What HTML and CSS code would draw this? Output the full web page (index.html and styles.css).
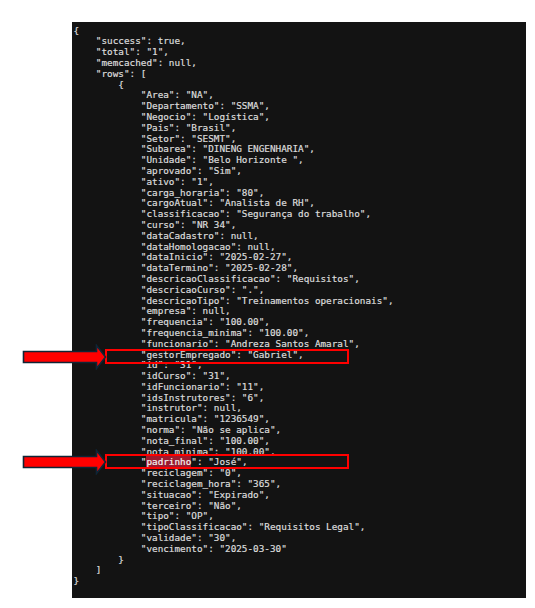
FILE: index.html
```html
<!DOCTYPE html>
<html lang="pt">
<head>
<meta charset="utf-8">
<title>JSON</title>
<link rel="stylesheet" href="styles.css">
</head>
<body>
<div class="page">
  <div class="panel">
<pre class="json">{
    "success": true,
    "total": "1",
    "memcached": null,
    "rows": [
        {
            "Area": "NA",
            "Departamento": "SSMA",
            "Negocio": "Logística",
            "Pais": "Brasil",
            "Setor": "SESMT",
            "Subarea": "DINENG ENGENHARIA",
            "Unidade": "Belo Horizonte ",
            "aprovado": "Sim",
            "ativo": "1",
            "carga_horaria": "80",
            "cargoAtual": "Analista de RH",
            "classificacao": "Segurança do trabalho",
            "curso": "NR 34",
            "dataCadastro": null,
            "dataHomologacao": null,
            "dataInicio": "2025-02-27",
            "dataTermino": "2025-02-28",
            "descricaoClassificacao": "Requisitos",
            "descricaoCurso": ".",
            "descricaoTipo": "Treinamentos operacionais",
            "empresa": null,
            "frequencia": "100.00",
            "frequencia_minima": "100.00",
            "funcionario": "Andreza Santos Amaral",
            "gestorEmpregado": "Gabriel",
            "id": "31",
            "idCurso": "31",
            "idFuncionario": "11",
            "idsInstrutores": "6",
            "instrutor": null,
            "matricula": "1236549",
            "norma": "Não se aplica",
            "nota_final": "100.00",
            "nota_minima": "100.00",
            "<span class="hit">padrinho</span>": "José",
            "reciclagem": "0",
            "reciclagem_hora": "365",
            "situacao": "Expirado",
            "terceiro": "Não",
            "tipo": "OP",
            "tipoClassificacao": "Requisitos Legal",
            "validade": "30",
            "vencimento": "2025-03-30"
        }
    ]
}</pre>
  </div>
  <div class="mark mark-1"></div>
  <div class="mark mark-2"></div>
  <svg class="arrow arrow-1" width="86" height="26" viewBox="0 0 86 26"><path d="M1.5 7.5 H74.5 V1.5 L83.5 13 L74.5 24.5 V18.5 H1.5 Z" fill="#ff0000" stroke="#0f2536" stroke-width="1.6" stroke-linejoin="miter"/></svg>
  <svg class="arrow arrow-2" width="86" height="26" viewBox="0 0 86 26"><path d="M1.5 7.5 H74.5 V1.5 L83.5 13 L74.5 24.5 V18.5 H1.5 Z" fill="#ff0000" stroke="#0f2536" stroke-width="1.6" stroke-linejoin="miter"/></svg>
</div>
</body>
</html>
```

FILE: styles.css
```css
html, body {
  margin: 0;
  padding: 0;
  background: #ffffff;
}

.page {
  position: relative;
  width: 535px;
  height: 608px;
  padding-top: 22px;
  box-sizing: border-box;
}

.panel {
  margin-left: 72px;
  width: 454px;
  height: 576px;
  background: #131313;
  box-sizing: border-box;
  padding: 3.6px 0 0 1.4px;
  overflow: hidden;
}

.json {
  margin: 0;
  font-family: "DejaVu Sans Mono", "Liberation Mono", monospace;
  font-size: 9.33px;
  line-height: 10.8px;
  color: #dcdcdc;
  -webkit-text-stroke: 0.2px #dcdcdc;
  white-space: pre;
}

.hit {
  background: #9c1a2e;
  color: #f2f2f2;
  -webkit-text-stroke: 0.2px #f2f2f2;
}

.mark {
  position: absolute;
  left: 105px;
  width: 244px;
  height: 15px;
  border: 2px solid #ff0000;
  box-sizing: border-box;
}

.mark-1 { top: 349px; }
.mark-2 { top: 454px; }

.arrow {
  position: absolute;
  left: 22px;
  display: block;
}

.arrow-1 { top: 344px; }
.arrow-2 { top: 449px; }
```
